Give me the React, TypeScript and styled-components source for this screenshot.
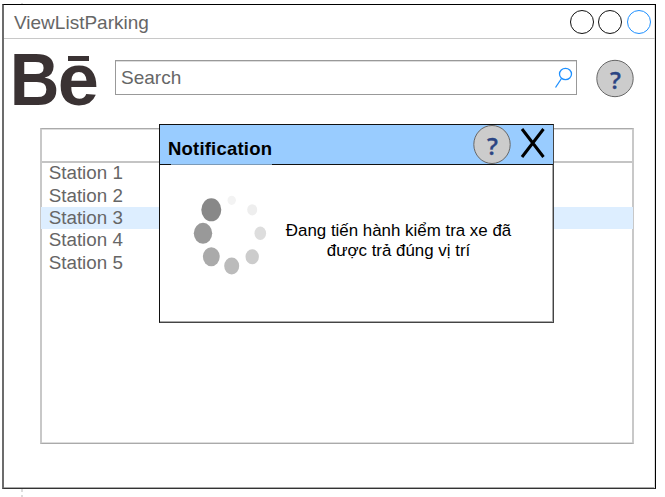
import React from 'react';
import styled, { createGlobalStyle } from 'styled-components';

const GlobalStyle = createGlobalStyle`
  * { box-sizing: border-box; }
  body { margin: 0; background: #fff; font-family: "Liberation Sans", Arial, sans-serif; }
`;

const Canvas = styled.main`
  position: relative;
  width: 665px;
  height: 497px;
  padding: 4px 0 0 2px;
  overflow: hidden;
`;

const Guide = styled.span<{ $top: number; $height: number }>`
  position: absolute;
  left: 21px;
  top: ${(p) => p.$top}px;
  width: 2px;
  height: ${(p) => p.$height}px;
  background: #dcdcdc;
`;

const Window = styled.section`
  width: 654px;
  height: 485px;
  border: solid #000;
  border-width: 1px 1px 1px 2px;
  border-color: #000 #000 #333 #6c6c6c;
  box-shadow: inset -1px 0 0 #ddd, inset 0 -1px 0 #aaa;
  color: #666;
  font-size: 19px;
`;

const TitleBar = styled.header`
  display: flex;
  align-items: center;
  justify-content: space-between;
  height: 34px;
  padding: 0 4.5px 0 10px;
  border-bottom: 1px solid #c8c8c8;
`;

const WindowTitle = styled.span`
  padding-top: 2px;
`;

const WindowButtons = styled.div`
  display: flex;
  gap: 4.2px;
`;

const WindowButton = styled.span<{ $color: string }>`
  width: 24px;
  height: 24px;
  border: 1.3px solid ${(p) => p.$color};
  border-radius: 50%;
`;

const Toolbar = styled.div`
  display: flex;
  height: 89px;
  padding-left: 4px;
`;

const Logo = styled.svg`
  width: 94px;
  height: 89px;
  font: bold 74px "Liberation Sans", Arial, sans-serif;
`;

const SearchBox = styled.div`
  display: flex;
  align-items: center;
  justify-content: space-between;
  width: 462px;
  height: 35px;
  margin: 21px 19px 0 13px;
  padding: 1px 2px 0 5px;
  border: 1px solid #999;
  box-shadow: inset 0 1px 0 #ddd;
`;

const HelpIcon = styled.svg`
  flex: none;
  font: 600 24px "Open Sans", sans-serif;
`;

const HelpSlot = styled.div`
  padding-top: 20px;
`;

const Table = styled.div`
  width: 594px;
  height: 316px;
  margin-left: 36px;
  border: solid #b5b5b5;
  border-width: 1px 2px 1px 2px;
  border-color: #aaa #c8c8c8 #aaa #c8c8c8;
  box-shadow: inset 0 -1px 0 #ddd, inset 0 1px 0 #ddd;
`;

const TableHeader = styled.div`
  height: 34px;
  border-bottom: 2px solid #c4c4c4;
`;

const TableBody = styled.div`
  margin: -0.7px -1px 0;
`;

const Row = styled.div<{ $selected?: boolean }>`
  height: 22.4px;
  padding-left: 7.7px;
  font-size: 18.8px;
  line-height: 21px;
  background: ${(p) => (p.$selected ? '#ddeeff' : 'transparent')};
`;

const Dialog = styled.section`
  position: absolute;
  left: 159px;
  top: 124px;
  width: 395px;
  height: 199px;
  border: 1px solid #111;
  border-right-color: #444;
  border-bottom-color: #444;
  box-shadow: inset -1px -1px 0 #aaa;
  background: #fff;
  color: #000;
`;

const DialogHeader = styled.header`
  display: flex;
  height: 40px;
  padding-left: 8px;
  background: #99ccff;
  border-bottom: 1px solid #111;
`;

const DialogTitle = styled.h1`
  width: 305px;
  margin: 0;
  padding-top: 13px;
  font-size: 18.5px;
  line-height: 22px;
  letter-spacing: 0.2px;
`;

const TitleUnderline = styled.span`
  display: block;
  width: 101px;
  height: 1px;
  margin: 4px 0 0 3px;
  background: #7b9ab8;
`;

const CloseIcon = styled.svg`
  margin: 2px 0 0 7px;
`;

const DialogBody = styled.div`
  display: flex;
  padding-left: 30px;
`;

const Spinner = styled.svg`
  width: 80px;
  height: 90px;
  margin-top: 26px;
`;

const Message = styled.p`
  width: 240px;
  margin: 56px 0 0 8.5px;
  font-size: 16.9px;
  line-height: 20px;
  text-align: center;
  white-space: pre-line;
`;

const dots = [
  [41.7, 9.3, 4.2, 4.6, '#f3f3f3'],
  [62.2, 18.8, 5, 5.6, '#eeeeee'],
  [70.3, 42.3, 5.8, 6.7, '#dddddd'],
  [62.2, 65.7, 6.7, 7.5, '#cccccc'],
  [41.7, 75, 7.5, 8.5, '#bbbbbb'],
  [21.3, 65.7, 8.4, 9.5, '#aaaaaa'],
  [13, 42.3, 9.2, 10.5, '#999999'],
  [21.3, 18.8, 10, 11.5, '#888888'],
] as const;

const Help = ({ ry }: { ry: number }) => (
  <HelpIcon width="38" height="40" viewBox="0 0 38 40">
    <ellipse cx="19" cy="19.5" rx="18.2" ry={ry} fill="#ccc" stroke="#666" />
    <text x="19.4" y="29.5" textAnchor="middle" fill="#2b4583" stroke="#2b4583" strokeWidth="0.3">?</text>
  </HelpIcon>
);

const stations = ['Station 1', 'Station 2', 'Station 3', 'Station 4', 'Station 5'];

export default function App() {
  return (
    <Canvas>
      <GlobalStyle />
      <Guide $top={3} $height={1} />
      <Guide $top={489} $height={3} />
      <Guide $top={495} $height={2} />
      <Window>
        <TitleBar>
          <WindowTitle>ViewListParking</WindowTitle>
          <WindowButtons>
            <WindowButton $color="#111" />
            <WindowButton $color="#111" />
            <WindowButton $color="#1e90ff" />
          </WindowButtons>
        </TitleBar>
        <Toolbar>
          <Logo viewBox="0 0 94 89" fill="#3a3233">
            <text transform="translate(1.8 66) scale(0.93 1)">B</text>
            <text x="49.8" y="66">e</text>
            <rect x="60" y="17" width="21" height="5" />
          </Logo>
          <SearchBox>
            <span>Search</span>
            <svg width="20" height="24" fill="none" stroke="#1e90ff" strokeWidth="1.3">
              <ellipse cx="11.5" cy="8" rx="6" ry="5.7" />
              <path d="M7.5 12.5 1.5 21.5" />
            </svg>
          </SearchBox>
          <HelpSlot>
            <Help ry={18.2} />
          </HelpSlot>
        </Toolbar>
        <Table>
          <TableHeader />
          <TableBody>
            {stations.map((name) => (
              <Row key={name} $selected={name === 'Station 3'}>{name}</Row>
            ))}
          </TableBody>
        </Table>
      </Window>
      <Dialog>
        <DialogHeader>
          <DialogTitle>
            Notification
            <TitleUnderline />
          </DialogTitle>
          <Help ry={19} />
          <CloseIcon width="28" height="32" stroke="#000" strokeWidth="3">
            <path d="M4 2 25.5 30M25.5 2 4 30" />
          </CloseIcon>
        </DialogHeader>
        <DialogBody>
          <Spinner>
            {dots.map(([cx, cy, rx, ry, fill]) => (
              <ellipse key={fill} cx={cx} cy={cy} rx={rx} ry={ry} fill={fill} />
            ))}
          </Spinner>
          <Message>{'Đang tiến hành kiểm tra xe đã\nđược trả đúng vị trí'}</Message>
        </DialogBody>
      </Dialog>
    </Canvas>
  );
}
